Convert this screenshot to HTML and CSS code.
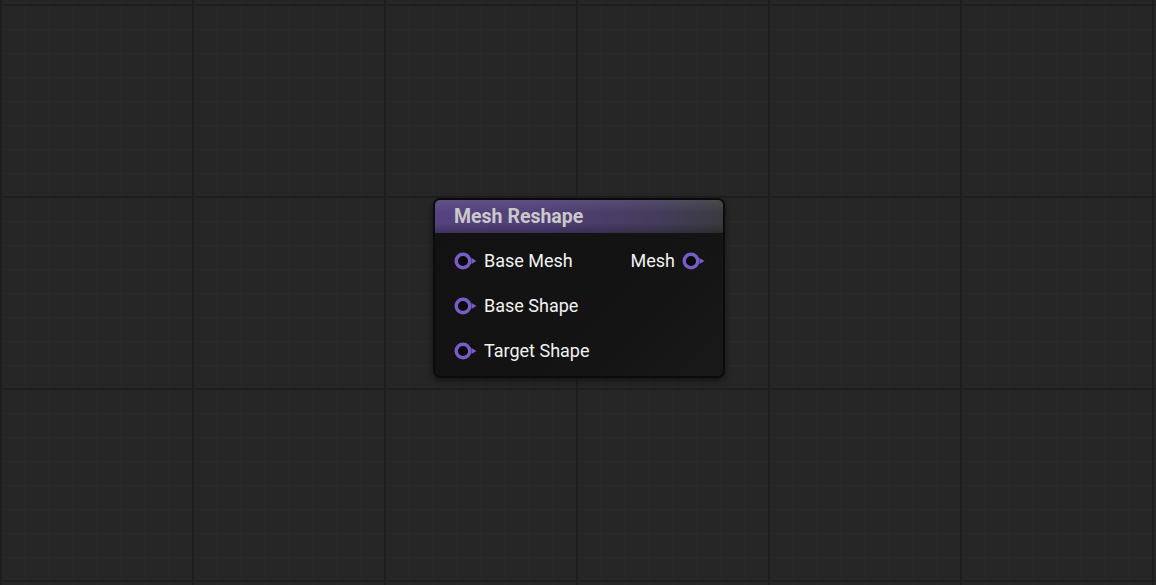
FILE: index.html
```html
<!DOCTYPE html>
<html>
<head>
    <meta charset="UTF-8">
    <title>Mesh Reshape</title>
    <link rel="stylesheet" href="styles.css">
</head>
<body>
    <div class="canvas">
        <div class="node">
            <div class="node-header">Mesh Reshape</div>
            <div class="node-body">
                <div class="row">
                    <div class="pin-in">
                        <svg class="pin" viewBox="0 0 23 18" width="23" height="18"><circle cx="9" cy="9" r="6.8" fill="#09090b" stroke="#7a5cc8" stroke-width="3.4"/><path d="M17.5 6 L22.5 9 L17.5 12 Z" fill="#7a5cc8"/></svg>
                        <span>Base Mesh</span>
                    </div>
                    <div class="pin-out">
                        <span>Mesh</span>
                        <svg class="pin" viewBox="0 0 23 18" width="23" height="18"><circle cx="9" cy="9" r="6.8" fill="#09090b" stroke="#7a5cc8" stroke-width="3.4"/><path d="M17.5 6 L22.5 9 L17.5 12 Z" fill="#7a5cc8"/></svg>
                    </div>
                </div>
                <div class="row">
                    <div class="pin-in">
                        <svg class="pin" viewBox="0 0 23 18" width="23" height="18"><circle cx="9" cy="9" r="6.8" fill="#09090b" stroke="#7a5cc8" stroke-width="3.4"/><path d="M17.5 6 L22.5 9 L17.5 12 Z" fill="#7a5cc8"/></svg>
                        <span>Base Shape</span>
                    </div>
                </div>
                <div class="row">
                    <div class="pin-in">
                        <svg class="pin" viewBox="0 0 23 18" width="23" height="18"><circle cx="9" cy="9" r="6.8" fill="#09090b" stroke="#7a5cc8" stroke-width="3.4"/><path d="M17.5 6 L22.5 9 L17.5 12 Z" fill="#7a5cc8"/></svg>
                        <span>Target Shape</span>
                    </div>
                </div>
            </div>
        </div>
    </div>
</body>
</html>
```

FILE: styles.css
```css
*
{
    box-sizing: border-box;
}

html, body
{
    margin: 0;
    height: 100%;
}

body
{
    font-family: Roboto, "Liberation Sans", sans-serif;
    background-color: #262626;
}

.canvas
{
    position: relative;
    width: 100%;
    height: 100%;
    overflow: hidden;
    background-color: #262626;
    background-image:
        linear-gradient(to right, #1e1e1e 2px, transparent 2px),
        linear-gradient(to bottom, #1e1e1e 2px, transparent 2px),
        linear-gradient(to right, #2a2a2a 1px, transparent 1px),
        linear-gradient(to bottom, #2a2a2a 1px, transparent 1px);
    background-size: 192px 192px, 192px 192px, 24px 24px, 24px 24px;
    background-position: 192px 196px, 192px 196px, 1px 5px, 1px 5px;
}

.node
{
    position: absolute;
    left: 433px;
    top: 198px;
    width: 292px;
    border: 2px solid #0b0b0b;
    border-radius: 7px;
    background: linear-gradient(135deg, #111211 0%, #121312 60%, #181918 100%);
    box-shadow: 0 3px 6px rgba(0, 0, 0, 0.45);
    overflow: hidden;
}

.node-header
{
    height: 33px;
    padding-left: 19px;
    display: flex;
    align-items: center;
    font-size: 19.5px;
    font-weight: 700;
    color: #c9c9c9;
    background:
        linear-gradient(to bottom, rgba(255, 255, 255, 0.08) 0%, rgba(255, 255, 255, 0) 40%, rgba(0, 0, 0, 0) 70%, rgba(0, 0, 0, 0.25) 100%),
        linear-gradient(to right, #54437f 0%, #4f3f77 40%, #433c58 80%, #3a3a3e 100%);
}

.node-body
{
    padding: 5px 18px 3px 19px;
}

.row
{
    height: 45px;
    display: flex;
    align-items: center;
    justify-content: space-between;
    font-size: 18px;
    color: #f2f2f2;
}

.pin-in, .pin-out
{
    display: flex;
    align-items: center;
    gap: 7px;
}

.pin
{
    display: block;
}
```
